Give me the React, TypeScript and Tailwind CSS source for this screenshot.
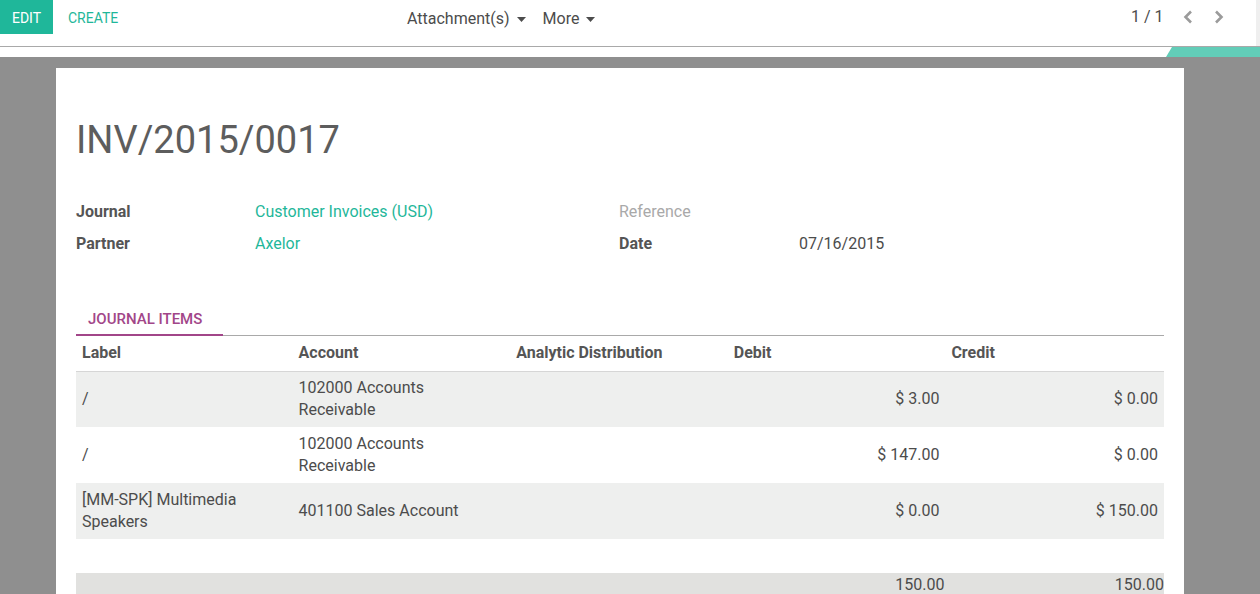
import React from "react";

const rows = [
  { label: ["/"], account: ["102000 Accounts", "Receivable"], debit: "$ 3.00", credit: "$ 0.00", bg: "bg-[#eeefee]" },
  { label: ["/"], account: ["102000 Accounts", "Receivable"], debit: "$ 147.00", credit: "$ 0.00", bg: "bg-white" },
  { label: ["[MM-SPK] Multimedia", "Speakers"], account: ["401100 Sales Account"], debit: "$ 0.00", credit: "$ 150.00", bg: "bg-[#eeefee]" },
];

function Caret() {
  return (
    <svg width="9" height="5" viewBox="0 0 9 5" className="ml-[7px] mt-[1px]">
      <path d="M0 0 L9 0 L4.5 5 Z" fill="#4c4c4c" />
    </svg>
  );
}

function Chevron({ dir }: { dir: "l" | "r" }) {
  return (
    <svg width="10" height="14" viewBox="0 0 10 14">
      <path
        d={dir === "l" ? "M8 1.5 L2.5 7 L8 12.5" : "M2 1.5 L7.5 7 L2 12.5"}
        fill="none"
        stroke="#9b9b9b"
        strokeWidth="2.6"
      />
    </svg>
  );
}

export default function App() {
  return (
    <div className="w-[1260px] h-[594px] overflow-hidden bg-[#8f8f8f] font-['Roboto',sans-serif] text-[#4c4c4c] relative">
      {/* control panel */}
      <div className="bg-white">
        <div className="h-[47px] border-b border-[#a9a9a9] flex items-start relative">
          <button className="h-[34px] pt-[2px] w-[53px] bg-[#1fb79a] text-white text-[14px] flex items-center justify-center">
            EDIT
          </button>
          <button className="h-[34px] pt-[2px] ml-[15px] text-[#1fb79a] text-[14px] flex items-center">CREATE</button>
          <div className="absolute left-[407px] top-0 h-[37px] flex items-center text-[16px] text-[#4c4c4c]">
            <span className="flex items-center">Attachment(s)<Caret /></span>
            <span className="flex items-center ml-[17px]">More<Caret /></span>
          </div>
          <div className="absolute left-[1131px] top-0 h-[34px] flex items-center text-[16px] text-[#4c4c4c]">
            <span>1 / 1</span>
            <span className="ml-[19px] flex"><Chevron dir="l" /></span>
            <span className="ml-[21px] flex"><Chevron dir="r" /></span>
          </div>
          <div className="absolute right-0 top-0 w-[4px] h-[46px] bg-[#efefef]" />
        </div>
        <div className="h-[10px] relative">
          <div className="absolute top-0 left-[1166px] right-0 h-[10px] bg-[#62cdb8] [clip-path:polygon(6px_0,100%_0,100%_100%,0_100%)]" />
        </div>
      </div>

      {/* sheet */}
      <div className="pt-[11px] pl-[56px]">
        <div className="w-[1128px] bg-white px-[20px] pt-[50px] pb-[40px]">
          <h1 className="text-[38px] leading-[44px] text-[#5d5d5d] font-normal">INV/2015/0017</h1>

          <div className="mt-[34px] flex text-[16px]">
            <div className="w-[543px]">
              <div className="h-[32px] flex items-center">
                <span className="w-[179px] font-bold text-[#555]">Journal</span>
                <span className="text-[#1fb79a]">Customer Invoices (USD)</span>
              </div>
              <div className="h-[32px] flex items-center">
                <span className="w-[179px] font-bold text-[#555]">Partner</span>
                <span className="text-[#1fb79a]">Axelor</span>
              </div>
            </div>
            <div>
              <div className="h-[32px] flex items-center">
                <span className="text-[#a9a9a9]">Reference</span>
              </div>
              <div className="h-[32px] flex items-center">
                <span className="w-[180px] font-bold text-[#555]">Date</span>
                <span className="text-[#4c4c4c]">07/16/2015</span>
              </div>
            </div>
          </div>

          {/* tab */}
          <div className="mt-[43px] flex border-b border-[#a9a9a9]">
            <div className="w-[147px] h-[33px] pt-[2px] -mb-px border-b-2 border-[#a24689] pl-[12px] flex items-center text-[15px] text-[#a24689] font-medium">
              JOURNAL ITEMS
            </div>
          </div>

          <table className="w-full table-fixed border-collapse text-[16px]">
            <thead>
              <tr className="h-[35px] border-b border-[#d6d6d6]">
                <th className="text-left font-bold text-[#555] pl-[6px]">Label</th>
                <th className="text-left font-bold text-[#555] pl-[5px]">Account</th>
                <th className="text-left font-bold text-[#555] pl-[5px]">Analytic Distribution</th>
                <th className="text-left font-bold text-[#555] pl-[5px]">Debit</th>
                <th className="text-left font-bold text-[#555] pl-[5px]">Credit</th>
              </tr>
            </thead>
            <tbody>
              {rows.map((r, i) => (
                <tr key={i} className={`${r.bg} h-[56px]`}>
                  <td className="pl-[6px] leading-[22px] align-middle">
                    {r.label.map((l, j) => (
                      <div key={j}>{l}</div>
                    ))}
                  </td>
                  <td className="pl-[5px] leading-[22px] align-middle">
                    {r.account.map((l, j) => (
                      <div key={j}>{l}</div>
                    ))}
                  </td>
                  <td />
                  <td className="text-right pr-[7px]">{r.debit}</td>
                  <td className="text-right pr-[6px]">{r.credit}</td>
                </tr>
              ))}
              <tr className="h-[34px]">
                <td colSpan={5} />
              </tr>
            </tbody>
            <tfoot>
              <tr className="bg-[#e1e1df]">
                <td className="h-[24px]" />
                <td />
                <td />
                <td className="text-right pr-[2px] leading-[24px] align-middle">150.00</td>
                <td className="text-right pr-0 leading-[24px] align-middle">150.00</td>
              </tr>
              <tr className="bg-[#e1e1df] h-[20px]">
                <td colSpan={5} />
              </tr>
            </tfoot>
          </table>
        </div>
      </div>
    </div>
  );
}
